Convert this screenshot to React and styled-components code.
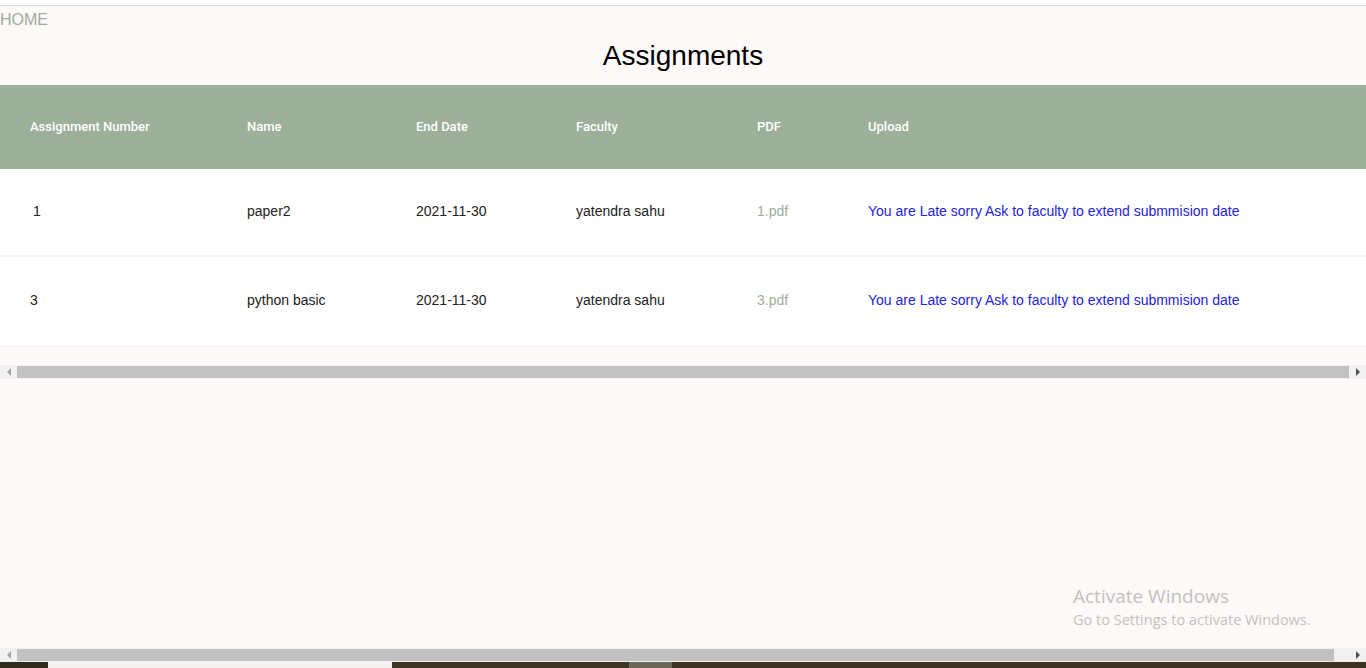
import React from "react";
import styled, { createGlobalStyle } from "styled-components";

const Global = createGlobalStyle`
  html, body { margin: 0; padding: 0; }
  body {
    background: #fcf9f8;
    font-family: "Liberation Sans", Arial, sans-serif;
    overflow: hidden;
  }
`;

const Page = styled.div`
  position: relative;
  height: 668px;
  display: flex;
  flex-direction: column;
  background: #fcf9f8;
`;

const TopStrip = styled.div`
  height: 5px;
  background: #ffffff;
  border-bottom: 1px solid #d9d7d6;
  flex: none;
`;

const Content = styled.main`
  flex: 1;
  display: flex;
  flex-direction: column;
`;

const HomeLink = styled.a`
  display: block;
  align-self: flex-start;
  margin-top: 5px;
  font-size: 16px;
  line-height: 18px;
  color: #9fae9b;
  text-decoration: none;
`;

const Title = styled.h1`
  margin: 11px 0 13px;
  font-size: 28px;
  line-height: 32px;
  font-weight: 400;
  text-align: center;
  color: #000;
`;

const Table = styled.table`
  width: 100%;
  border-collapse: collapse;
  table-layout: fixed;
`;

const HeadCell = styled.th`
  ${(p) => (p.$w ? `width: ${p.$w}px;` : "")}
  height: 82px;
  padding: 0 0 2px 30px;
  background: #9cb09a;
  color: #ffffff;
  font-family: Roboto, "Liberation Sans", sans-serif;
  font-weight: 500;
  font-size: 13px;
  text-align: left;
  vertical-align: middle;
`;

const Row = styled.tr`
  background: #ffffff;
  border-bottom: 2px solid #f7f3f2;
`;

const Cell = styled.td`
  height: ${(p) => p.$h || 86}px;
  padding: 0 0 2px ${(p) => p.$pl || 30}px;
  font-size: 14px;
  color: #222;
  vertical-align: middle;
  white-space: nowrap;
`;

const Link = styled.a`
  color: ${(p) => p.$color};
  text-decoration: none;
`;

const ScrollBar = styled.div`
  height: 14px;
  display: flex;
  align-items: stretch;
  background: #f1f1f1;
  margin-top: ${(p) => p.$mt || 0}px;
  flex: none;
`;

const Arrow = styled.div`
  width: 17px;
  display: flex;
  align-items: center;
  justify-content: center;
  flex: none;
  &::before {
    content: "";
    border-top: 4px solid transparent;
    border-bottom: 4px solid transparent;
    ${(p) => (p.$dir === "left" ? "border-right: 4px solid #a3a3a3;" : "border-left: 4px solid #505050;")}
  }
`;

const Track = styled.div`
  flex: 1;
  display: flex;
  align-items: center;
  padding-right: ${(p) => p.$gap || 0}px;
`;

const Thumb = styled.div`
  flex: 1;
  height: 12px;
  background: #c1c1c1;
`;

const Taskbar = styled.div`
  height: 6px;
  display: flex;
  background: #3b3424;
  flex: none;
`;

const TaskSeg = styled.div`
  width: ${(p) => p.$w}px;
  background: ${(p) => p.$bg};
  flex: none;
`;

const Watermark = styled.div`
  position: absolute;
  left: 1073px;
  top: 585px;
  font-family: "Open Sans", "Noto Sans", sans-serif;
  color: #c4c0bf;
  line-height: 1.2;
`;

const WmTitle = styled.div`
  font-size: 19px;
`;

const WmSub = styled.div`
  font-size: 14.5px;
  margin-top: 3px;
`;

const cols = [
  { label: "Assignment Number", w: 187 },
  { label: "Name", w: 139 },
  { label: "End Date", w: 130 },
  { label: "Faculty", w: 151 },
  { label: "PDF", w: 81 },
  { label: "Upload" },
];

const rows = [
  { n: "1", pl: 33, h: 84, name: "paper2", date: "2021-11-30", fac: "yatendra sahu", pdf: "1.pdf" },
  { n: "3", pl: 30, h: 86, name: "python basic", date: "2021-11-30", fac: "yatendra sahu", pdf: "3.pdf" },
];

const late = "You are Late sorry Ask to faculty to extend submmision date";

export default function App() {
  return (
    <Page>
      <Global />
      <TopStrip />
      <Content>
        <HomeLink href="#">HOME</HomeLink>
        <Title>Assignments</Title>
        <Table>
          <thead>
            <tr>
              {cols.map((c) => (
                <HeadCell key={c.label} $w={c.w}>
                  {c.label}
                </HeadCell>
              ))}
            </tr>
          </thead>
          <tbody>
            {rows.map((r) => (
              <Row key={r.n}>
                <Cell $pl={r.pl} $h={r.h}>{r.n}</Cell>
                <Cell $h={r.h}>{r.name}</Cell>
                <Cell $h={r.h}>{r.date}</Cell>
                <Cell $h={r.h}>{r.fac}</Cell>
                <Cell $h={r.h}>
                  <Link href="#" $color="#9fae9b">{r.pdf}</Link>
                </Cell>
                <Cell $h={r.h}>
                  <Link href="#" $color="#2323dc">{late}</Link>
                </Cell>
              </Row>
            ))}
          </tbody>
        </Table>
        <ScrollBar $mt={18}>
          <Arrow $dir="left" />
          <Track>
            <Thumb />
          </Track>
          <Arrow $dir="right" />
        </ScrollBar>
      </Content>
      <ScrollBar>
        <Arrow $dir="left" />
        <Track $gap={15}>
          <Thumb />
        </Track>
        <Arrow $dir="right" />
      </ScrollBar>
      <Taskbar>
        <TaskSeg $w={48} $bg="#2f2b1f" />
        <TaskSeg $w={344} $bg="#f4f3f2" />
        <TaskSeg $w={237} $bg="#3d3624" />
        <TaskSeg $w={43} $bg="#6b665a" />
      </Taskbar>
      <Watermark>
        <WmTitle>Activate Windows</WmTitle>
        <WmSub>Go to Settings to activate Windows.</WmSub>
      </Watermark>
    </Page>
  );
}
